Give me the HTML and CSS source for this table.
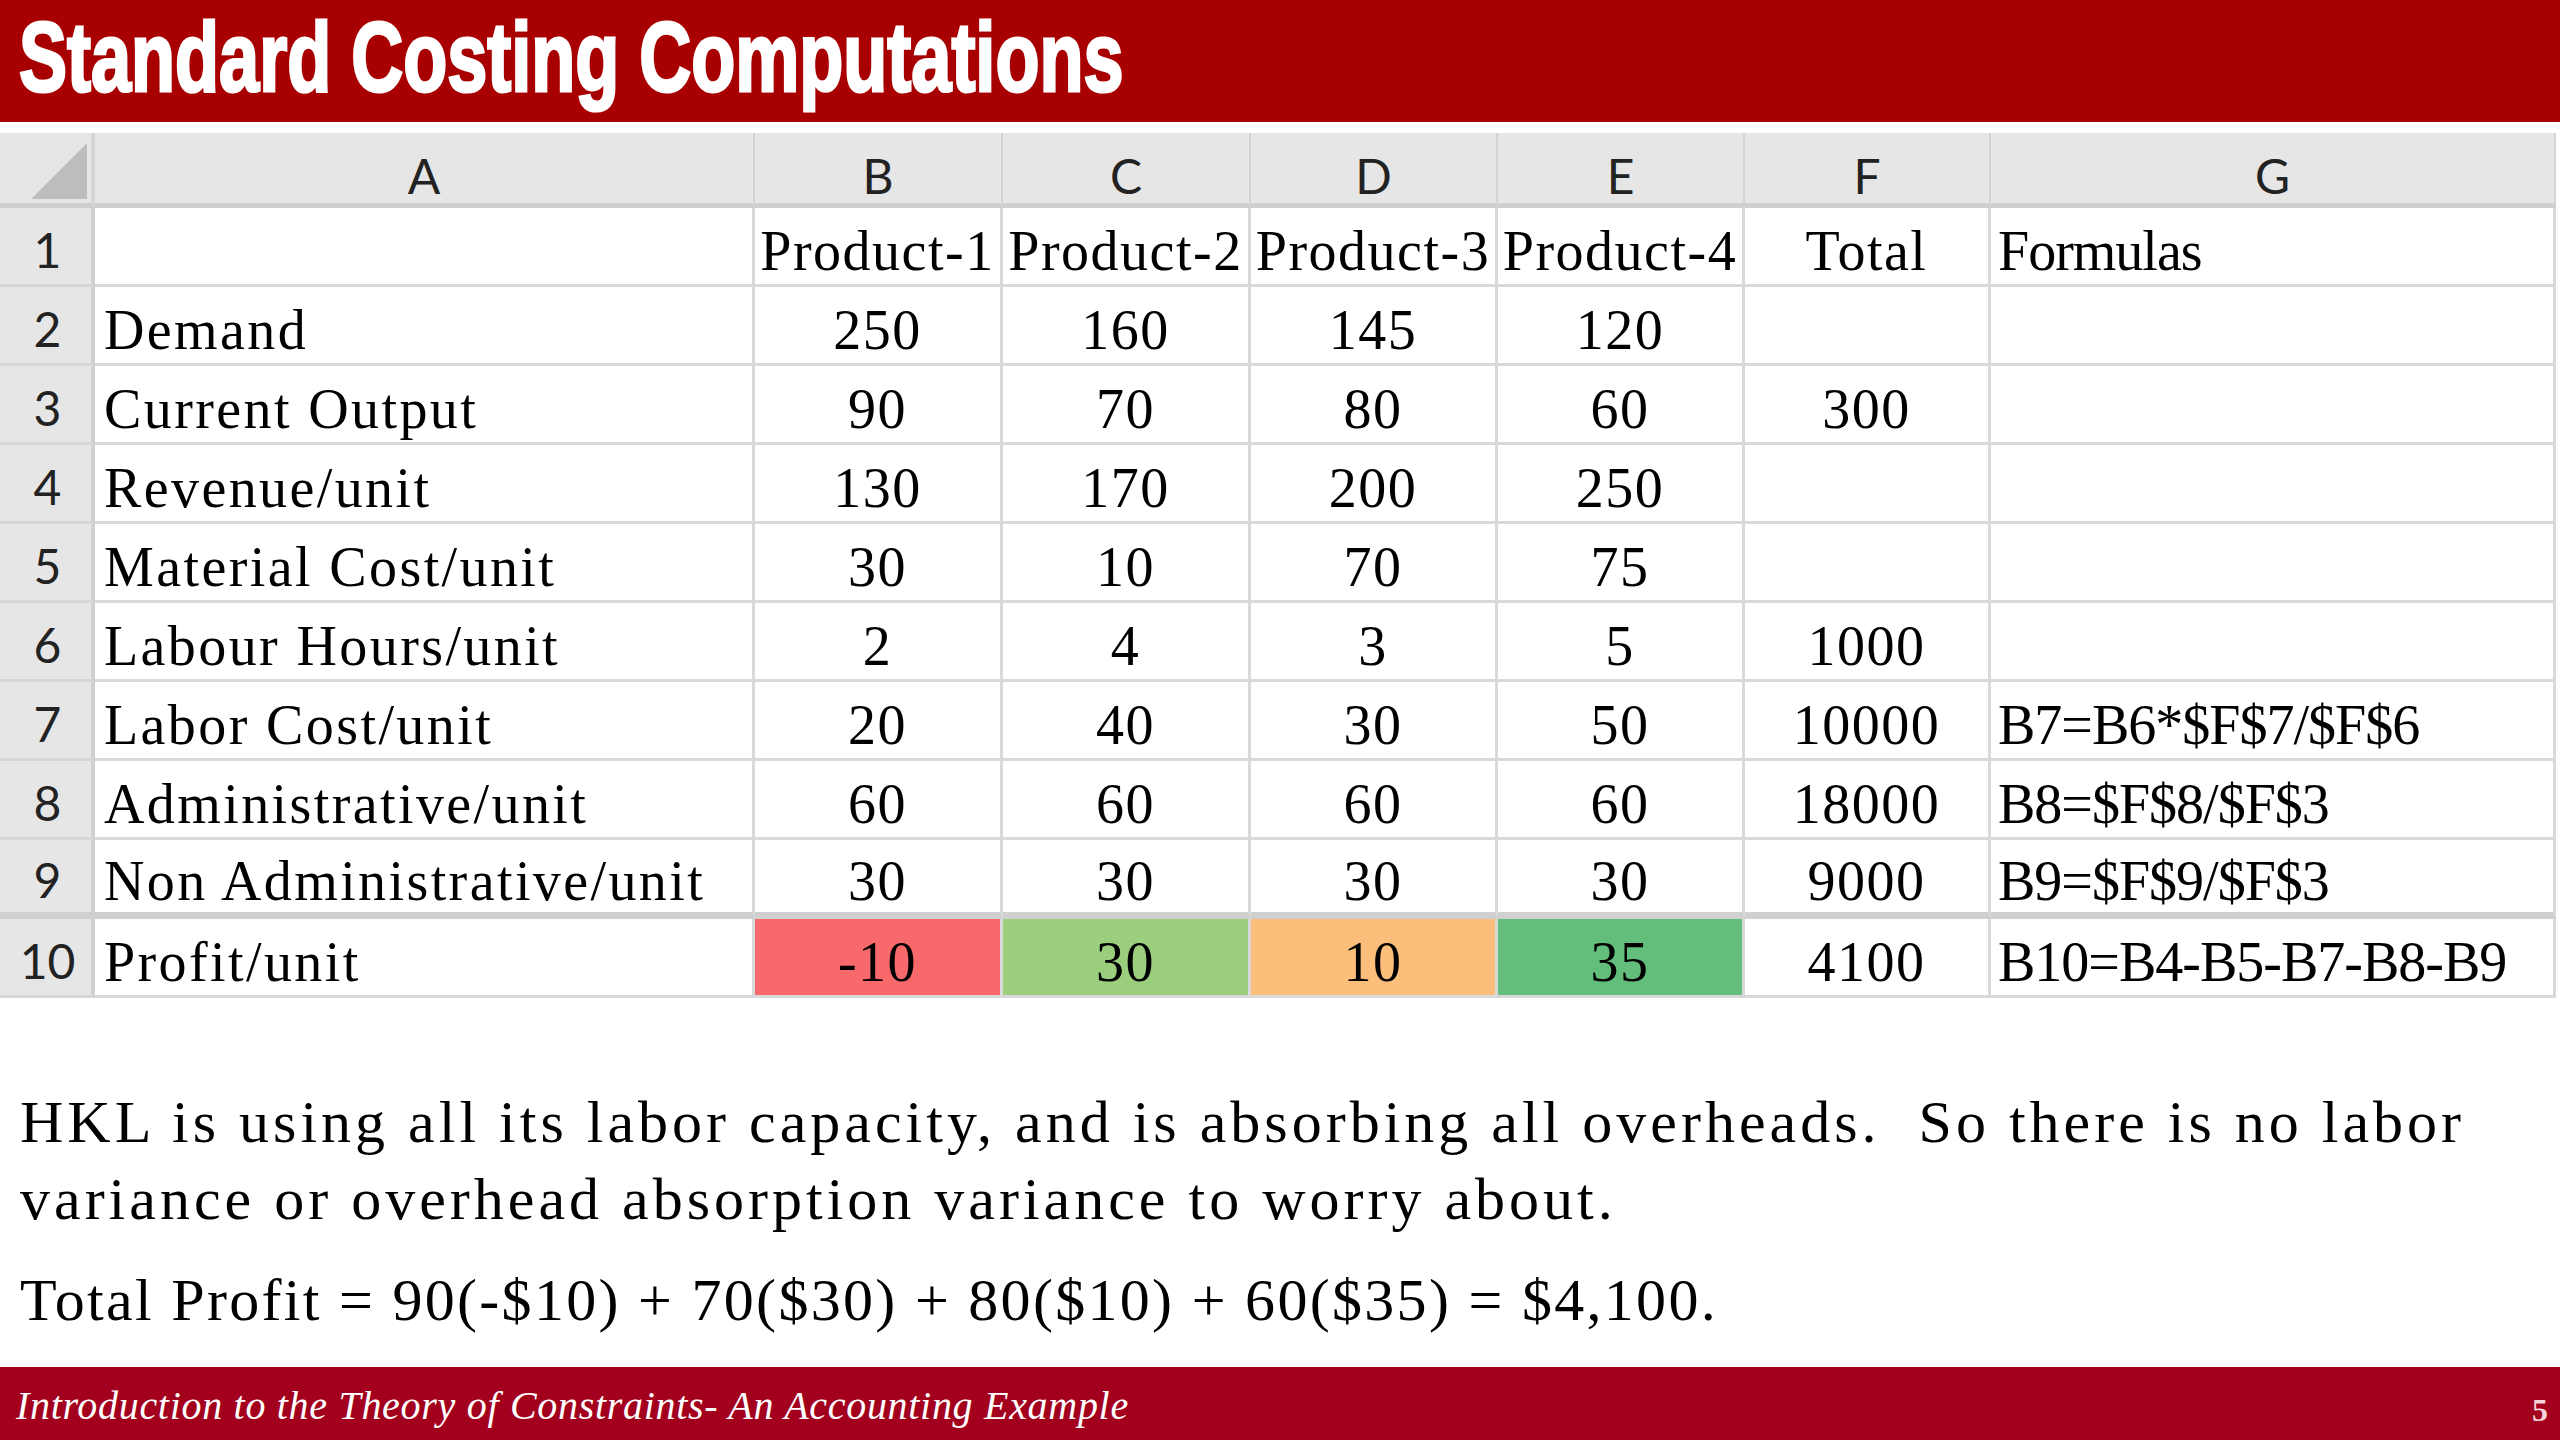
FILE: index.html
```html
<!DOCTYPE html>
<html lang="en">
<head>
<meta charset="utf-8">
<title>Standard Costing Computations</title>
<link rel="stylesheet" href="styles.css">
</head>
<body>
<div class="slide">
  <header class="title-bar">
    <h1 class="title">Standard Costing Computations</h1>
  </header>

  <div class="sheet">
    <div class="corner"><svg class="corner-tri" viewBox="0 0 56 56" width="56" height="56"><polygon points="56,0 56,56 0,56" fill="#bdbdbd"/></svg></div>
    <div class="colhdr">A</div>
    <div class="colhdr">B</div>
    <div class="colhdr">C</div>
    <div class="colhdr">D</div>
    <div class="colhdr">E</div>
    <div class="colhdr">F</div>
    <div class="colhdr">G</div>

    <div class="rowhdr">1</div>
    <div class="cell label"></div>
    <div class="cell">Product-1</div>
    <div class="cell">Product-2</div>
    <div class="cell">Product-3</div>
    <div class="cell">Product-4</div>
    <div class="cell">Total</div>
    <div class="cell formula">Formulas</div>

    <div class="rowhdr">2</div>
    <div class="cell label">Demand</div>
    <div class="cell">250</div>
    <div class="cell">160</div>
    <div class="cell">145</div>
    <div class="cell">120</div>
    <div class="cell"></div>
    <div class="cell formula"></div>

    <div class="rowhdr">3</div>
    <div class="cell label">Current Output</div>
    <div class="cell">90</div>
    <div class="cell">70</div>
    <div class="cell">80</div>
    <div class="cell">60</div>
    <div class="cell">300</div>
    <div class="cell formula"></div>

    <div class="rowhdr">4</div>
    <div class="cell label">Revenue/unit</div>
    <div class="cell">130</div>
    <div class="cell">170</div>
    <div class="cell">200</div>
    <div class="cell">250</div>
    <div class="cell"></div>
    <div class="cell formula"></div>

    <div class="rowhdr">5</div>
    <div class="cell label">Material Cost/unit</div>
    <div class="cell">30</div>
    <div class="cell">10</div>
    <div class="cell">70</div>
    <div class="cell">75</div>
    <div class="cell"></div>
    <div class="cell formula"></div>

    <div class="rowhdr">6</div>
    <div class="cell label">Labour Hours/unit</div>
    <div class="cell">2</div>
    <div class="cell">4</div>
    <div class="cell">3</div>
    <div class="cell">5</div>
    <div class="cell">1000</div>
    <div class="cell formula"></div>

    <div class="rowhdr">7</div>
    <div class="cell label">Labor Cost/unit</div>
    <div class="cell">20</div>
    <div class="cell">40</div>
    <div class="cell">30</div>
    <div class="cell">50</div>
    <div class="cell">10000</div>
    <div class="cell formula">B7=B6*$F$7/$F$6</div>

    <div class="rowhdr">8</div>
    <div class="cell label">Administrative/unit</div>
    <div class="cell">60</div>
    <div class="cell">60</div>
    <div class="cell">60</div>
    <div class="cell">60</div>
    <div class="cell">18000</div>
    <div class="cell formula">B8=$F$8/$F$3</div>

    <div class="rowhdr r9">9</div>
    <div class="cell label r9">Non Administrative/unit</div>
    <div class="cell r9">30</div>
    <div class="cell r9">30</div>
    <div class="cell r9">30</div>
    <div class="cell r9">30</div>
    <div class="cell r9">9000</div>
    <div class="cell formula r9">B9=$F$9/$F$3</div>

    <div class="rowhdr">10</div>
    <div class="cell label">Profit/unit</div>
    <div class="cell neg">-10</div>
    <div class="cell good">30</div>
    <div class="cell mid">10</div>
    <div class="cell best">35</div>
    <div class="cell">4100</div>
    <div class="cell formula">B10=B4-B5-B7-B8-B9</div>
  </div>

  <section class="notes">
    <p class="note">HKL is using all its labor capacity, and is absorbing all overheads.&nbsp; So there is no labor<br>variance or overhead absorption variance to worry about.</p>
    <p class="note total">Total Profit = 90(-$10) + 70($30) + 80($10) + 60($35) = $4,100.</p>
  </section>

  <footer class="footer">
    <span class="footer-text">Introduction to the Theory of Constraints- An Accounting Example</span>
    <span class="page-num">5</span>
  </footer>
</div>
</body>
</html>
```

FILE: styles.css
```css
html, body {
  margin: 0;
  padding: 0;
  background: #ffffff;
}

.slide {
  width: 2560px;
  height: 1440px;
  display: flex;
  flex-direction: column;
  overflow: hidden;
  background: #ffffff;
}

.title-bar {
  height: 122px;
  background: #a80000;
  flex: none;
  box-sizing: border-box;
  padding: 8px 0 0 19px;
}

.title {
  margin: 0;
  font-family: "Liberation Sans", Arial, sans-serif;
  font-weight: bold;
  font-size: 98px;
  line-height: 98px;
  color: #ffffff;
  -webkit-text-stroke: 3px #ffffff;
  transform: scaleX(0.735);
  transform-origin: left center;
  white-space: nowrap;
}

.sheet {
  margin-top: 11px;
  width: 2560px;
  display: grid;
  grid-template-columns: 95px 660px 248px 248px 247px 247px 246px 565px;
  grid-template-rows: 75px repeat(10, 79px);
  flex: none;
}

.corner,
.colhdr {
  background: #e6e6e6;
  border-bottom: 5px solid #cfcfcf;
  box-sizing: border-box;
}

.corner {
  border-right: 4px solid #d6d6d6;
  display: flex;
  align-items: flex-end;
  justify-content: flex-end;
  padding: 0 4px 4px 0;
}

.corner-tri {
  display: block;
}

.colhdr {
  border-right: 2px solid #d3d3d3;
  display: flex;
  align-items: center;
  justify-content: center;
  padding-top: 15px;
  font-family: Lato, "Open Sans", sans-serif;
  font-size: 48px;
  color: #222222;
}

.rowhdr {
  background: #e6e6e6;
  border-right: 4px solid #d0d0d0;
  border-bottom: 3px solid #d6d6d6;
  box-sizing: border-box;
  display: flex;
  align-items: center;
  justify-content: center;
  padding: 6px 0 0 4px;
  font-family: Lato, "Open Sans", sans-serif;
  font-size: 48px;
  color: #222222;
}

.cell {
  box-sizing: border-box;
  border-right: 3px solid #d9d9d9;
  border-bottom: 3px solid #d9d9d9;
  background: #ffffff;
  display: flex;
  align-items: center;
  justify-content: center;
  padding-top: 9px;
  font-family: "Liberation Serif", "Times New Roman", serif;
  font-size: 56px;
  letter-spacing: 1.5px;
  color: #000000;
  white-space: nowrap;
}

.cell.label {
  justify-content: flex-start;
  padding-left: 9px;
  letter-spacing: 2.4px;
}

.cell.formula {
  justify-content: flex-start;
  padding-left: 7px;
  letter-spacing: -1px;
}

.r9 {
  border-bottom-width: 7px;
  border-bottom-color: #d0d0d0;
}

.cell.neg  { background: #f8696b; }
.cell.good { background: #9bcf7d; }
.cell.mid  { background: #fbbe7b; }
.cell.best { background: #63be7b; }

.notes {
  padding: 86px 0 0 20px;
  flex: none;
}

.note {
  margin: 0;
  font-family: "Liberation Serif", "Times New Roman", serif;
  font-size: 60px;
  line-height: 77px;
  letter-spacing: 4px;
  color: #000000;
  white-space: nowrap;
}

.note.total {
  margin-top: 24px;
  letter-spacing: 2.3px;
}

.footer {
  margin-top: auto;
  height: 73px;
  background: #a3001e;
  flex: none;
  display: flex;
  align-items: center;
  justify-content: space-between;
  box-sizing: border-box;
  padding: 4px 12px 0 16px;
}

.footer-text {
  font-family: "Liberation Serif", "Times New Roman", serif;
  font-style: italic;
  font-size: 40px;
  letter-spacing: 0.7px;
  color: #ffffff;
}

.page-num {
  font-family: "Liberation Serif", "Times New Roman", serif;
  font-size: 32px;
  font-weight: bold;
  color: #f5d3d8;
  padding-top: 10px;
}
```
